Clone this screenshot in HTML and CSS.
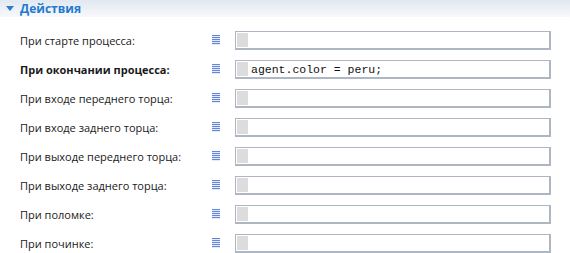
FILE: index.html
```html
<!DOCTYPE html>
<html lang="ru">
<head>
    <meta charset="UTF-8">
    <title>Действия</title>
    <link rel="stylesheet" href="styles.css">
</head>
<body>
    <div class="section-header">
        <span class="arrow"></span>
        <span class="section-title">Действия</span>
    </div>

    <div class="actions">
        <div class="label">При старте процесса:</div>
        <div class="icon"><svg width="8" height="10" viewBox="0 0 8 10" shape-rendering="crispEdges"><rect width="8" height="10" fill="#e4ebf9"/><path d="M0 0h8v1H0zM0 2h8v1H0zM0 4h8v1H0zM0 6h8v1H0zM0 8h8v1H0z" fill="#6486d9"/></svg></div>
        <div class="field"><span class="marker"></span></div>

        <div class="label bold">При окончании процесса:</div>
        <div class="icon"><svg width="8" height="10" viewBox="0 0 8 10" shape-rendering="crispEdges"><rect width="8" height="10" fill="#e4ebf9"/><path d="M0 0h8v1H0zM0 2h8v1H0zM0 4h8v1H0zM0 6h8v1H0zM0 8h8v1H0z" fill="#6486d9"/></svg></div>
        <div class="field"><span class="marker"></span><span class="code">agent.color = peru;</span></div>

        <div class="label">При входе переднего торца:</div>
        <div class="icon"><svg width="8" height="10" viewBox="0 0 8 10" shape-rendering="crispEdges"><rect width="8" height="10" fill="#e4ebf9"/><path d="M0 0h8v1H0zM0 2h8v1H0zM0 4h8v1H0zM0 6h8v1H0zM0 8h8v1H0z" fill="#6486d9"/></svg></div>
        <div class="field"><span class="marker"></span></div>

        <div class="label">При входе заднего торца:</div>
        <div class="icon"><svg width="8" height="10" viewBox="0 0 8 10" shape-rendering="crispEdges"><rect width="8" height="10" fill="#e4ebf9"/><path d="M0 0h8v1H0zM0 2h8v1H0zM0 4h8v1H0zM0 6h8v1H0zM0 8h8v1H0z" fill="#6486d9"/></svg></div>
        <div class="field"><span class="marker"></span></div>

        <div class="label">При выходе переднего торца:</div>
        <div class="icon"><svg width="8" height="10" viewBox="0 0 8 10" shape-rendering="crispEdges"><rect width="8" height="10" fill="#e4ebf9"/><path d="M0 0h8v1H0zM0 2h8v1H0zM0 4h8v1H0zM0 6h8v1H0zM0 8h8v1H0z" fill="#6486d9"/></svg></div>
        <div class="field"><span class="marker"></span></div>

        <div class="label">При выходе заднего торца:</div>
        <div class="icon"><svg width="8" height="10" viewBox="0 0 8 10" shape-rendering="crispEdges"><rect width="8" height="10" fill="#e4ebf9"/><path d="M0 0h8v1H0zM0 2h8v1H0zM0 4h8v1H0zM0 6h8v1H0zM0 8h8v1H0z" fill="#6486d9"/></svg></div>
        <div class="field"><span class="marker"></span></div>

        <div class="label">При поломке:</div>
        <div class="icon"><svg width="8" height="10" viewBox="0 0 8 10" shape-rendering="crispEdges"><rect width="8" height="10" fill="#e4ebf9"/><path d="M0 0h8v1H0zM0 2h8v1H0zM0 4h8v1H0zM0 6h8v1H0zM0 8h8v1H0z" fill="#6486d9"/></svg></div>
        <div class="field"><span class="marker"></span></div>

        <div class="label">При починке:</div>
        <div class="icon"><svg width="8" height="10" viewBox="0 0 8 10" shape-rendering="crispEdges"><rect width="8" height="10" fill="#e4ebf9"/><path d="M0 0h8v1H0zM0 2h8v1H0zM0 4h8v1H0zM0 6h8v1H0zM0 8h8v1H0z" fill="#6486d9"/></svg></div>
        <div class="field"><span class="marker"></span></div>
    </div>
</body>
</html>
```

FILE: styles.css
```css
body {
    margin: 0;
    background: white;
    font-family: "Open Sans", "DejaVu Sans", sans-serif;
    font-size: 11px;
    color: #1a1a1a;
}
.section-header {
    height: 17px;
    display: flex;
    align-items: center;
    padding-left: 6px;
    background: linear-gradient(to bottom, #e1e8f1, #f8f9fb);
}
.arrow {
    width: 0;
    height: 0;
    border-left: 4px solid transparent;
    border-right: 4px solid transparent;
    border-top: 5px solid #2f79c9;
    margin-right: 6px;
}
.section-title {
    font-weight: bold;
    font-size: 12px;
    color: #1f7ad0;
}
.actions {
    display: grid;
    grid-template-columns: 192px 23px 316px;
    grid-auto-rows: 19px;
    row-gap: 10px;
    padding: 14px 0 0 20px;
}
.label {
    display: flex;
    align-items: center;
    white-space: nowrap;
}
.bold {
    font-weight: bold;
}
.icon {
    padding-top: 4px;
}
.icon svg {
    display: block;
}
.field {
    box-sizing: border-box;
    border: 2px solid #aeb7c1;
    border-width: 1px 2px 2px 1px;
    display: flex;
    align-items: stretch;
    padding: 1px;
}
.marker {
    width: 11px;
    background: #dcdcdc;
}
.code {
    font-family: "Liberation Mono", monospace;
    font-size: 11.5px;
    line-height: 15px;
    margin-left: 3px;
    color: #111;
}
```
